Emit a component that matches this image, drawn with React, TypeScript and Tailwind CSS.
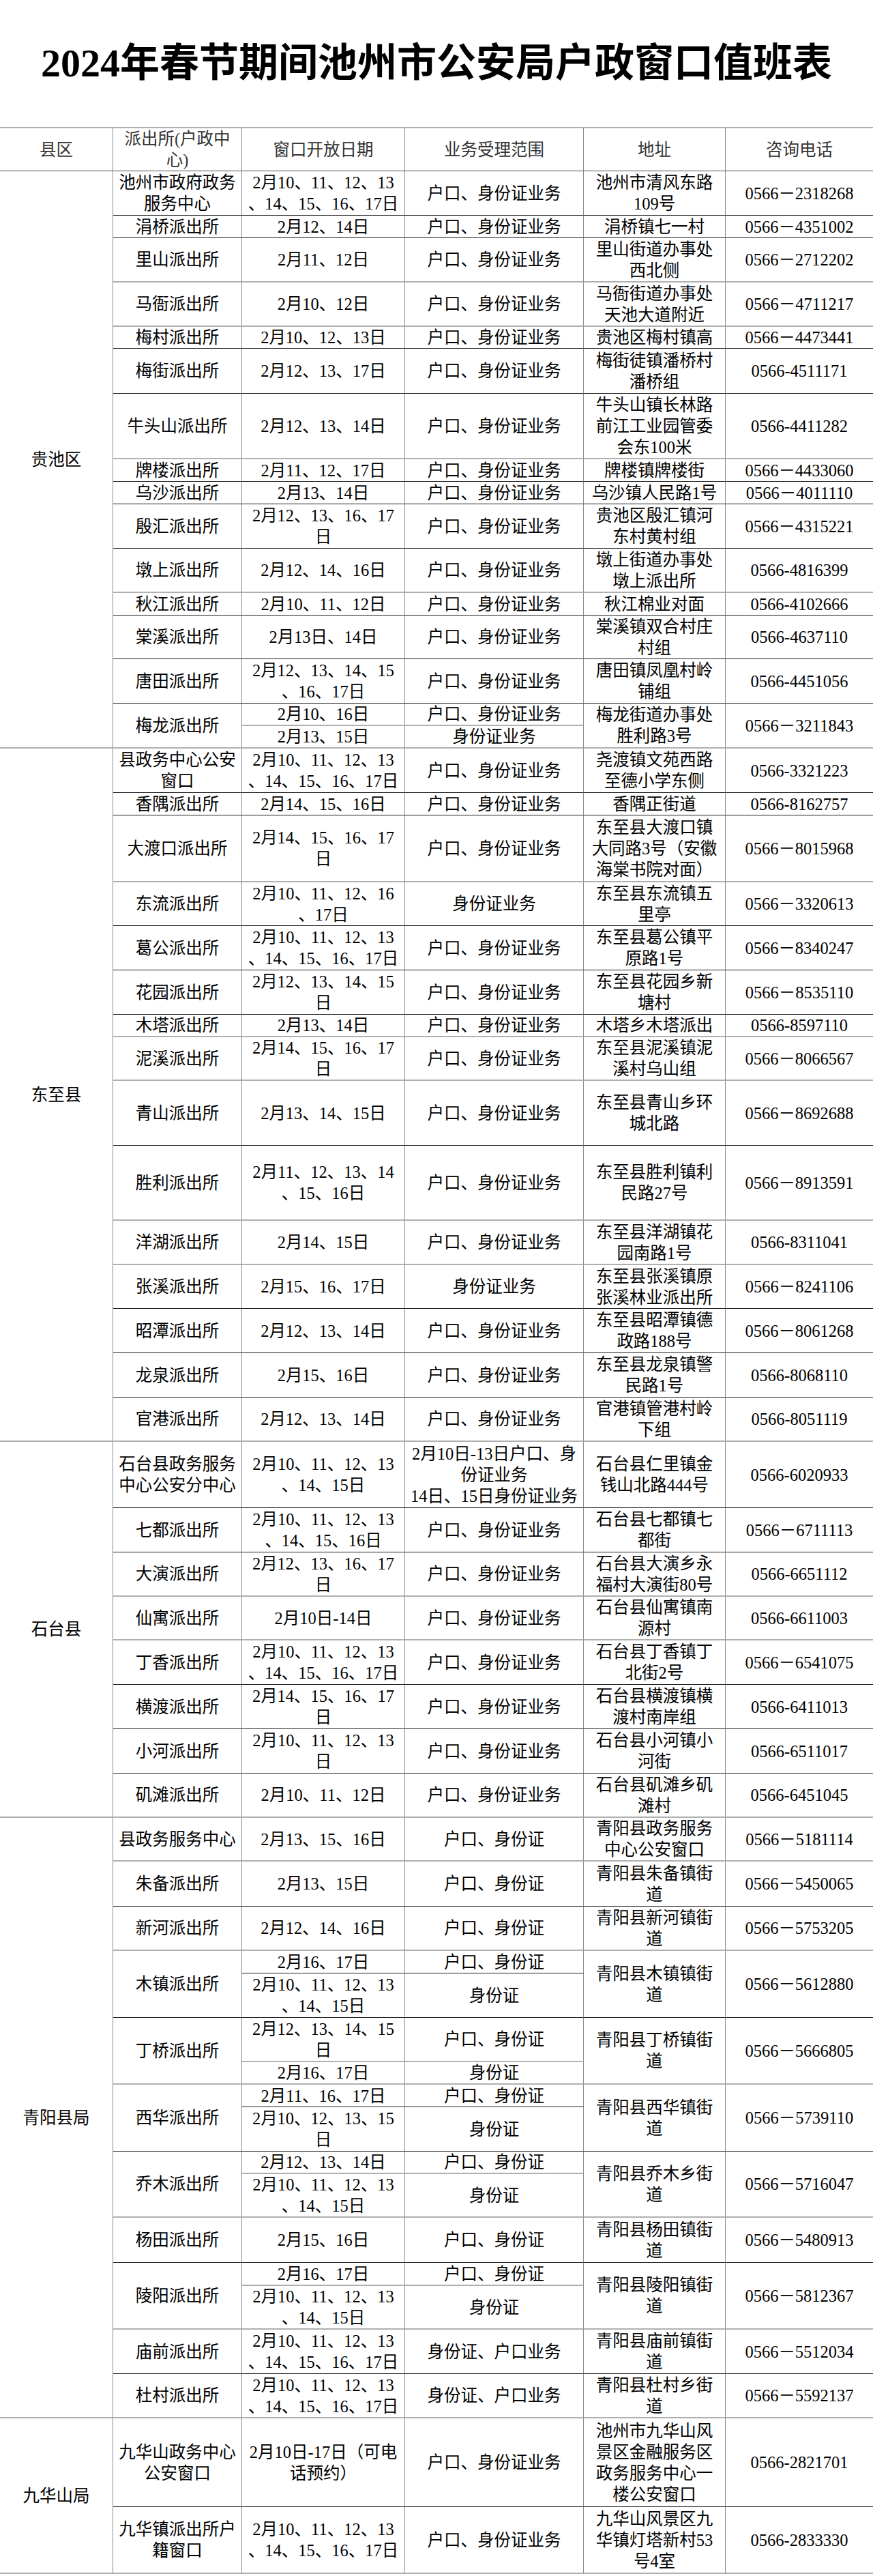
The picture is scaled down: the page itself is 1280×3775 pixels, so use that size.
import React from 'react';

type B = 'd' | 'g';
type Sub = { d: string; s: string; h: string; b?: B };
type Entry = { n: string; subs: Sub[]; a: string; p: string; b: B };
type Group = { c: string; entries: Entry[] };

const e = (n: string, d: string, s: string, a: string, p: string, h: string, b: B): Entry => ({
  n,
  subs: [{ d, s, h }],
  a,
  p,
  b,
});
const sp = (n: string, subs: Sub[], a: string, p: string, b: B): Entry => ({ n, subs, a, p, b });

const HK = '户口、身份证业务';
const HS = '户口、身份证';

const groups: Group[] = [
  {
    c: '贵池区',
    entries: [
      e('池州市政府政务/服务中心', '2月10、11、12、13/、14、15、16、17日', HK, '池州市清风东路/109号', '0566－2318268', 'h-[65px]', 'd'),
      e('涓桥派出所', '2月12、14日', HK, '涓桥镇七一村', '0566－4351002', 'h-[33px]', 'd'),
      e('里山派出所', '2月11、12日', HK, '里山街道办事处/西北侧', '0566－2712202', 'h-[65px]', 'g'),
      e('马衙派出所', '2月10、12日', HK, '马衙街道办事处/天池大道附近', '0566－4711217', 'h-[65px]', 'g'),
      e('梅村派出所', '2月10、12、13日', HK, '贵池区梅村镇高', '0566－4473441', 'h-[32px]', 'd'),
      e('梅街派出所', '2月12、13、17日', HK, '梅街徒镇潘桥村/潘桥组', '0566-4511171', 'h-[66px]', 'd'),
      e('牛头山派出所', '2月12、13、14日', HK, '牛头山镇长林路/前江工业园管委/会东100米', '0566-4411282', 'h-[96px]', 'g'),
      e('牌楼派出所', '2月11、12、17日', HK, '牌楼镇牌楼街', '0566－4433060', 'h-[33px]', 'd'),
      e('乌沙派出所', '2月13、14日', HK, '乌沙镇人民路1号', '0566－4011110', 'h-[33px]', 'd'),
      e('殷汇派出所', '2月12、13、16、17/日', HK, '贵池区殷汇镇河/东村黄村组', '0566－4315221', 'h-[65px]', 'd'),
      e('墩上派出所', '2月12、14、16日', HK, '墩上街道办事处/墩上派出所', '0566-4816399', 'h-[65px]', 'g'),
      e('秋江派出所', '2月10、11、12日', HK, '秋江棉业对面', '0566-4102666', 'h-[33px]', 'd'),
      e('棠溪派出所', '2月13日、14日', HK, '棠溪镇双合村庄/村组', '0566-4637110', 'h-[64px]', 'd'),
      e('唐田派出所', '2月12、13、14、15/、16、17日', HK, '唐田镇凤凰村岭/铺组', '0566-4451056', 'h-[65px]', 'd'),
      sp(
        '梅龙派出所',
        [
          { d: '2月10、16日', s: HK, h: 'h-[33px]', b: 'g' },
          { d: '2月13、15日', s: '身份证业务', h: 'h-[32px]' },
        ],
        '梅龙街道办事处/胜利路3号',
        '0566－3211843',
        'g'
      ),
    ],
  },
  {
    c: '东至县',
    entries: [
      e('县政务中心公安/窗口', '2月10、11、12、13/、14、15、16、17日', HK, '尧渡镇文苑西路/至德小学东侧', '0566-3321223', 'h-[65px]', 'd'),
      e('香隅派出所', '2月14、15、16日', HK, '香隅正街道', '0566-8162757', 'h-[33px]', 'd'),
      e('大渡口派出所', '2月14、15、16、17/日', HK, '东至县大渡口镇/大同路3号（安徽/海棠书院对面）', '0566－8015968', 'h-[98px]', 'g'),
      e('东流派出所', '2月10、11、12、16/、17日', '身份证业务', '东至县东流镇五/里亭', '0566－3320613', 'h-[64px]', 'd'),
      e('葛公派出所', '2月10、11、12、13/、14、15、16、17日', HK, '东至县葛公镇平/原路1号', '0566－8340247', 'h-[65px]', 'd'),
      e('花园派出所', '2月12、13、14、15/日', HK, '东至县花园乡新/塘村', '0566－8535110', 'h-[65px]', 'd'),
      e('木塔派出所', '2月13、14日', HK, '木塔乡木塔派出', '0566-8597110', 'h-[33px]', 'g'),
      e('泥溪派出所', '2月14、15、16、17/日', HK, '东至县泥溪镇泥/溪村乌山组', '0566－8066567', 'h-[64px]', 'g'),
      e('青山派出所', '2月13、14、15日', HK, '东至县青山乡环/城北路', '0566－8692688', 'h-[95px]', 'd'),
      e('胜利派出所', '2月11、12、13、14/、15、16日', HK, '东至县胜利镇利/民路27号', '0566－8913591', 'h-[110px]', 'g'),
      e('洋湖派出所', '2月14、15日', HK, '东至县洋湖镇花/园南路1号', '0566-8311041', 'h-[65px]', 'g'),
      e('张溪派出所', '2月15、16、17日', '身份证业务', '东至县张溪镇原/张溪林业派出所', '0566－8241106', 'h-[64px]', 'd'),
      e('昭潭派出所', '2月12、13、14日', HK, '东至县昭潭镇德/政路188号', '0566－8061268', 'h-[65px]', 'd'),
      e('龙泉派出所', '2月15、16日', HK, '东至县龙泉镇警/民路1号', '0566-8068110', 'h-[65px]', 'd'),
      e('官港派出所', '2月12、13、14日', HK, '官港镇管港村岭/下组', '0566-8051119', 'h-[65px]', 'g'),
    ],
  },
  {
    c: '石台县',
    entries: [
      e(
        '石台县政务服务/中心公安分中心',
        '2月10、11、12、13/、14、15日',
        '2月10日-13日户口、身/份证业务/14日、15日身份证业务',
        '石台县仁里镇金/钱山北路444号',
        '0566-6020933',
        'h-[97px]',
        'd'
      ),
      e('七都派出所', '2月10、11、12、13/、14、15、16日', HK, '石台县七都镇七/都街', '0566－6711113', 'h-[65px]', 'd'),
      e('大演派出所', '2月12、13、16、17/日', HK, '石台县大演乡永/福村大演街80号', '0566-6651112', 'h-[65px]', 'g'),
      e('仙寓派出所', '2月10日-14日', HK, '石台县仙寓镇南/源村', '0566-6611003', 'h-[64px]', 'g'),
      e('丁香派出所', '2月10、11、12、13/、14、15、16、17日', HK, '石台县丁香镇丁/北街2号', '0566－6541075', 'h-[65px]', 'd'),
      e('横渡派出所', '2月14、15、16、17/日', HK, '石台县横渡镇横/渡村南岸组', '0566-6411013', 'h-[65px]', 'd'),
      e('小河派出所', '2月10、11、12、13/日', HK, '石台县小河镇小/河街', '0566-6511017', 'h-[65px]', 'd'),
      e('矶滩派出所', '2月10、11、12日', HK, '石台县矶滩乡矶/滩村', '0566-6451045', 'h-[65px]', 'g'),
    ],
  },
  {
    c: '青阳县局',
    entries: [
      e('县政务服务中心', '2月13、15、16日', HS, '青阳县政务服务/中心公安窗口', '0566－5181114', 'h-[64px]', 'g'),
      e('朱备派出所', '2月13、15日', HS, '青阳县朱备镇街/道', '0566－5450065', 'h-[66px]', 'd'),
      e('新河派出所', '2月12、14、16日', HS, '青阳县新河镇街/道', '0566－5753205', 'h-[65px]', 'g'),
      sp(
        '木镇派出所',
        [
          { d: '2月16、17日', s: HS, h: 'h-[33px]', b: 'd' },
          { d: '2月10、11、12、13/、14、15日', s: '身份证', h: 'h-[65px]' },
        ],
        '青阳县木镇镇街/道',
        '0566－5612880',
        'd'
      ),
      sp(
        '丁桥派出所',
        [
          { d: '2月12、13、14、15/日', s: HS, h: 'h-[65px]', b: 'g' },
          { d: '2月16、17日', s: '身份证', h: 'h-[32px]' },
        ],
        '青阳县丁桥镇街/道',
        '0566－5666805',
        'g'
      ),
      sp(
        '西华派出所',
        [
          { d: '2月11、16、17日', s: HS, h: 'h-[33px]', b: 'd' },
          { d: '2月10、12、13、15/日', s: '身份证', h: 'h-[65px]' },
        ],
        '青阳县西华镇街/道',
        '0566－5739110',
        'd'
      ),
      sp(
        '乔木派出所',
        [
          { d: '2月12、13、14日', s: HS, h: 'h-[33px]', b: 'g' },
          { d: '2月10、11、12、13/、14、15日', s: '身份证', h: 'h-[64px]' },
        ],
        '青阳县乔木乡街/道',
        '0566－5716047',
        'g'
      ),
      e('杨田派出所', '2月15、16日', HS, '青阳县杨田镇街/道', '0566－5480913', 'h-[66px]', 'd'),
      sp(
        '陵阳派出所',
        [
          { d: '2月16、17日', s: HS, h: 'h-[34px]', b: 'g' },
          { d: '2月10、11、12、13/、14、15日', s: '身份证', h: 'h-[64px]' },
        ],
        '青阳县陵阳镇街/道',
        '0566－5812367',
        'g'
      ),
      e('庙前派出所', '2月10、11、12、13/、14、15、16、17日', '身份证、户口业务', '青阳县庙前镇街/道', '0566－5512034', 'h-[65px]', 'd'),
      e('杜村派出所', '2月10、11、12、13/、14、15、16、17日', '身份证、户口业务', '青阳县杜村乡街/道', '0566－5592137', 'h-[65px]', 'g'),
    ],
  },
  {
    c: '九华山局',
    entries: [
      e(
        '九华山政务中心/公安窗口',
        '2月10日-17日（可电/话预约）',
        HK,
        '池州市九华山风/景区金融服务区/政务服务中心一/楼公安窗口',
        '0566-2821701',
        'h-[130px]',
        'd'
      ),
      e(
        '九华镇派出所户/籍窗口',
        '2月10、11、12、13/、14、15、16、17日',
        HK,
        '九华山风景区九/华镇灯塔新村53/号4室',
        '0566-2833330',
        'h-[98px]',
        'g'
      ),
    ],
  },
];

const BB: Record<B, string> = {
  d: 'border-b border-b-[#1c1c1c]',
  g: 'border-b-2 border-b-[#b0b0b0]',
};
const BR = 'border-r border-r-[#8c8c8c]';
const CELL = 'p-0 text-center align-middle whitespace-nowrap overflow-visible';

function Lines({ t }: { t: string }) {
  return (
    <>
      {t.split('/').map((x, i) => (
        <div key={i} className="h-[31px] leading-[31px]">
          {x}
        </div>
      ))}
    </>
  );
}

export default function App() {
  const rows: React.ReactNode[] = [];
  groups.forEach((g, gi) => {
    const total = g.entries.reduce((acc, en) => acc + en.subs.length, 0);
    const last = g.entries[g.entries.length - 1];
    let first = true;
    g.entries.forEach((en, ei) => {
      en.subs.forEach((s, si) => {
        const isLastSub = si === en.subs.length - 1;
        const sb = isLastSub ? en.b : (s.b as B);
        rows.push(
          <tr key={`${gi}-${ei}-${si}`} className={s.h}>
            {first && (
              <td rowSpan={total} className={`${CELL} ${BR} ${BB[last.b]}`}>
                <Lines t={g.c} />
              </td>
            )}
            {si === 0 && (
              <td rowSpan={en.subs.length} className={`${CELL} ${BR} ${BB[en.b]}`}>
                <Lines t={en.n} />
              </td>
            )}
            <td className={`${CELL} ${BR} ${BB[sb]}`}>
              <Lines t={s.d} />
            </td>
            <td className={`${CELL} ${BR} ${BB[sb]}`}>
              <Lines t={s.s} />
            </td>
            {si === 0 && (
              <td rowSpan={en.subs.length} className={`${CELL} ${BR} ${BB[en.b]}`}>
                <Lines t={en.a} />
              </td>
            )}
            {si === 0 && (
              <td rowSpan={en.subs.length} className={`${CELL} ${BB[en.b]}`}>
                <Lines t={en.p} />
              </td>
            )}
          </tr>
        );
        first = false;
      });
    });
  });

  const H = `${CELL} border-t-2 border-t-[#b0b0b0] border-b border-b-[#4a4a4a] text-[#333] font-normal`;

  return (
    <div className="w-[1280px] h-[3775px] overflow-hidden bg-white text-black font-['Liberation_Serif','Noto_Sans_CJK_SC',serif]">
      <div className="h-[186px] flex items-center justify-center">
        <h1 className="text-[58px] leading-none font-bold">2024年春节期间池州市公安局户政窗口值班表</h1>
      </div>
      <table className="w-[1280px] table-fixed border-separate border-spacing-0 text-[24.5px]">
        <colgroup>
          <col className="w-[166px]" />
          <col className="w-[189px]" />
          <col className="w-[239px]" />
          <col className="w-[262px]" />
          <col className="w-[208px]" />
          <col className="w-[216px]" />
        </colgroup>
        <thead>
          <tr className="h-[64px]">
            <th className={`${H} ${BR}`}>
              <Lines t="县区" />
            </th>
            <th className={`${H} ${BR}`}>
              <Lines t="派出所(户政中/心)" />
            </th>
            <th className={`${H} ${BR}`}>
              <Lines t="窗口开放日期" />
            </th>
            <th className={`${H} ${BR}`}>
              <Lines t="业务受理范围" />
            </th>
            <th className={`${H} ${BR}`}>
              <Lines t="地址" />
            </th>
            <th className={H}>
              <Lines t="咨询电话" />
            </th>
          </tr>
        </thead>
        <tbody>{rows}</tbody>
      </table>
    </div>
  );
}
